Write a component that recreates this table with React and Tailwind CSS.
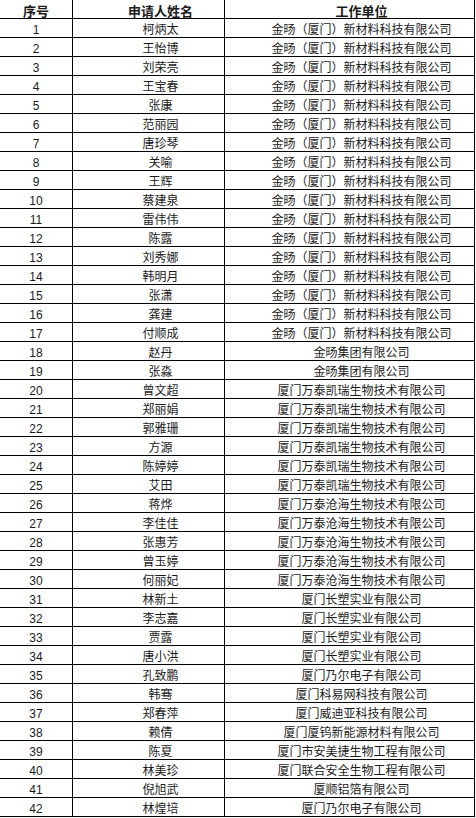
import React from "react";

const JY = "金旸（厦门）新材料科技有限公司";
const KR = "厦门万泰凯瑞生物技术有限公司";
const CH = "厦门万泰沧海生物技术有限公司";
const CS = "厦门长塑实业有限公司";

const ROWS = [
  ["柯炳太", JY], ["王怡博", JY], ["刘荣亮", JY], ["王宝春", JY], ["张康", JY],
  ["范丽园", JY], ["唐珍琴", JY], ["关喻", JY], ["王辉", JY], ["蔡建泉", JY],
  ["雷伟伟", JY], ["陈露", JY], ["刘秀娜", JY], ["韩明月", JY], ["张潇", JY],
  ["龚建", JY], ["付顺成", JY],
  ["赵丹", "金旸集团有限公司"], ["张淼", "金旸集团有限公司"],
  ["曾文超", KR], ["郑丽娟", KR], ["郭雅珊", KR], ["方源", KR], ["陈婷婷", KR], ["艾田", KR],
  ["蒋烨", CH], ["李佳佳", CH], ["张惠芳", CH], ["曾玉婷", CH], ["何丽妃", CH],
  ["林新土", CS], ["李志嘉", CS], ["贾露", CS], ["唐小洪", CS],
  ["孔致鹏", "厦门乃尔电子有限公司"],
  ["韩骞", "厦门科易网科技有限公司"],
  ["郑春萍", "厦门威迪亚科技有限公司"],
  ["赖倩", "厦门厦钨新能源材料有限公司"],
  ["陈夏", "厦门市安美捷生物工程有限公司"],
  ["林美珍", "厦门联合安全生物工程有限公司"],
  ["倪旭武", "厦顺铝箔有限公司"],
  ["林煌培", "厦门乃尔电子有限公司"],
];

const cell = "h-[19px] border-b border-r border-black pt-[5px] leading-[13px] text-center whitespace-nowrap";

export default function App() {
  return (
    <div
      className="w-[476px] h-[818px] bg-white text-[#1a1a1a] overflow-hidden"
      style={{ fontFamily: '"Liberation Sans", "Noto Sans CJK SC", sans-serif' }}
    >
      <div className="grid grid-cols-[73px_152px_250px]">
        <div className={`${cell} text-[13px] font-bold`}>序号</div>
        <div className={`${cell} pl-6 text-[13px] font-bold`}>申请人姓名</div>
        <div className={`${cell} pl-6 text-[13px] font-bold`}>工作单位</div>
        {ROWS.map(([name, unit], i) => (
          <React.Fragment key={i}>
            <div className={`${cell} text-[12px]`}>{i + 1}</div>
            <div className={`${cell} pl-6 text-[12px]`}>{name}</div>
            <div className={`${cell} pl-6 text-[12px]`}>{unit}</div>
          </React.Fragment>
        ))}
      </div>
    </div>
  );
}
